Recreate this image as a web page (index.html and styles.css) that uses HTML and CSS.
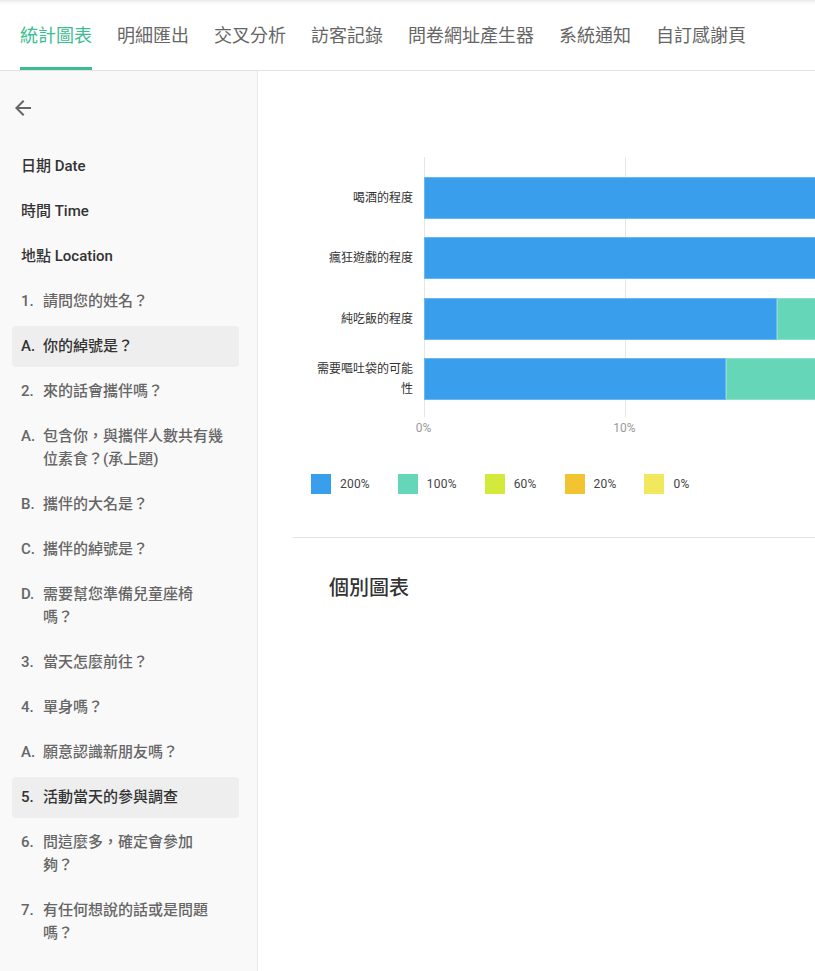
FILE: index.html
```html
<!doctype html>
<html>
    <head>
        <meta charset="utf-8" />
        <title>統計圖表</title>
        <link rel="stylesheet" href="styles.css">
    </head>
    <body>
        <nav class="tabs">
            <a class="tab active">統計圖表</a>
            <a class="tab">明細匯出</a>
            <a class="tab">交叉分析</a>
            <a class="tab">訪客記錄</a>
            <a class="tab">問卷網址產生器</a>
            <a class="tab">系統通知</a>
            <a class="tab">自訂感謝頁</a>
        </nav>

        <div class="layout">
            <aside class="sidebar">
                <div class="back">
                    <svg width="24" height="24" viewBox="0 0 24 24"><path d="M20 11H7.83l5.59-5.59L12 4l-8 8 8 8 1.41-1.41L7.83 13H20v-2z" fill="#666"/></svg>
                </div>
                <ul class="q-list">
                    <li class="q-item title">日期 Date</li>
                    <li class="q-item title">時間 Time</li>
                    <li class="q-item title">地點 Location</li>
                    <li class="q-item"><span class="num">1.</span><span>請問您的姓名？</span></li>
                    <li class="q-item active"><span class="num">A.</span><span>你的綽號是？</span></li>
                    <li class="q-item"><span class="num">2.</span><span>來的話會攜伴嗎？</span></li>
                    <li class="q-item"><span class="num">A.</span><span>包含你，與攜伴人數共有幾位素食？(承上題)</span></li>
                    <li class="q-item"><span class="num">B.</span><span>攜伴的大名是？</span></li>
                    <li class="q-item"><span class="num">C.</span><span>攜伴的綽號是？</span></li>
                    <li class="q-item"><span class="num">D.</span><span>需要幫您準備兒童座椅<br>嗎？</span></li>
                    <li class="q-item"><span class="num">3.</span><span>當天怎麼前往？</span></li>
                    <li class="q-item"><span class="num">4.</span><span>單身嗎？</span></li>
                    <li class="q-item"><span class="num">A.</span><span>願意認識新朋友嗎？</span></li>
                    <li class="q-item active"><span class="num">5.</span><span>活動當天的參與調查</span></li>
                    <li class="q-item"><span class="num">6.</span><span>問這麼多，確定會參加<br>夠？</span></li>
                    <li class="q-item"><span class="num">7.</span><span>有任何想說的話或是問題<br>嗎？</span></li>
                </ul>
            </aside>

            <main class="content">
                <div class="chart">
                    <div class="chart-labels">
                        <div class="chart-label"><span>喝酒的程度</span></div>
                        <div class="chart-label"><span>瘋狂遊戲的程度</span></div>
                        <div class="chart-label"><span>純吃飯的程度</span></div>
                        <div class="chart-label"><span>需要嘔吐袋的可能性</span></div>
                    </div>
                    <div class="chart-plot">
                        <div class="bar">
                            <div class="seg c200" style="width: 46%"></div>
                            <div class="seg c100" style="width: 30%"></div>
                        </div>
                        <div class="bar">
                            <div class="seg c200" style="width: 48%"></div>
                            <div class="seg c100" style="width: 28%"></div>
                        </div>
                        <div class="bar">
                            <div class="seg c200" style="width: 17.56%"></div>
                            <div class="seg c100" style="width: 40%"></div>
                        </div>
                        <div class="bar">
                            <div class="seg c200" style="width: 15.03%"></div>
                            <div class="seg c100" style="width: 40%"></div>
                        </div>
                    </div>
                </div>
                <div class="chart-axis">
                    <span class="tick">0%</span>
                    <span class="tick">10%</span>
                </div>

                <div class="legend">
                    <div class="legend-item"><span class="swatch c200"></span>200%</div>
                    <div class="legend-item"><span class="swatch c100"></span>100%</div>
                    <div class="legend-item"><span class="swatch c60"></span>60%</div>
                    <div class="legend-item"><span class="swatch c20"></span>20%</div>
                    <div class="legend-item"><span class="swatch c0"></span>0%</div>
                </div>

                <hr class="divider">

                <h3 class="section-title">個別圖表</h3>
            </main>
        </div>
    </body>
</html>
```

FILE: styles.css
```css
html,
body {
    height: 100%;
}
body {
    margin: 0;
    font-family: Roboto, "Noto Sans CJK TC", sans-serif;
    color: #333;
    background: #fff;
    overflow: hidden;
}
.tabs {
    display: flex;
    height: 70px;
    padding-left: 20px;
    border-bottom: 1px solid #e2e2e2;
    box-shadow: inset 0 5px 5px -5px rgba(0, 0, 0, 0.18);
}
.tab {
    display: flex;
    align-items: center;
    height: 70px;
    box-sizing: border-box;
    margin-right: 25px;
    padding-top: 1px;
    border-bottom: 3px solid transparent;
    font-size: 18px;
    color: #666;
    cursor: pointer;
}
.tab.active {
    color: #3dbd8f;
    border-bottom-color: #3dbd8f;
}
.layout {
    display: flex;
    height: calc(100% - 71px);
}
.sidebar {
    flex: 0 0 257px;
    background: #f9f9f9;
    border-right: 1px solid #e8e8e8;
    padding-top: 25px;
}
.back {
    height: 24px;
    padding-left: 11px;
}
.q-list {
    list-style: none;
    display: flex;
    flex-direction: column;
    gap: 4px;
    margin: 26px 0 0;
    padding: 0;
}
.q-item {
    display: flex;
    margin: 0 18px 0 12px;
    padding: 9px;
    border-radius: 4px;
    font-size: 15px;
    line-height: 23px;
    font-weight: 500;
    color: #666;
}
.q-item .num {
    flex: 0 0 22px;
}
.q-item.title,
.q-item.active {
    color: #333;
}
.q-item.active {
    background: #eee;
}
.content {
    flex: 1;
    min-width: 0;
    overflow: hidden;
    padding: 86px 0 0 35px;
}
.chart {
    display: flex;
    width: 2200px;
}
.chart-labels {
    flex: 0 0 131px;
    box-sizing: border-box;
    padding: 20px 11px 17px 0;
    display: flex;
    flex-direction: column;
    gap: 18.33px;
}
.chart-label {
    height: 42px;
    display: flex;
    align-items: center;
    justify-content: flex-end;
    text-align: right;
    font-size: 12px;
    line-height: 20px;
    color: #333;
}
.chart-label span {
    max-width: 100px;
}
.chart-plot {
    flex: 0 0 2010px;
    padding: 20px 0 17px;
    display: flex;
    flex-direction: column;
    gap: 18.33px;
    background: repeating-linear-gradient(to right, #e6e6e6 0 1px, transparent 1px 201px);
}
.bar {
    display: flex;
    height: 42px;
}
.seg {
    height: 100%;
    box-shadow: inset 0 0 0 1px rgba(255, 255, 255, 0.25);
}
.c200 { background: #399fec; }
.c100 { background: #66d6b9; }
.c60 { background: #d4ea3a; }
.c20 { background: #f2c431; }
.c0 { background: #f1e85d; }
.chart-axis {
    display: flex;
    width: 2200px;
    margin: 4px 0 0 30px;
}
.tick {
    flex: 0 0 201px;
    text-align: center;
    font-size: 12px;
    line-height: 14px;
    color: #999;
}
.legend {
    display: flex;
    gap: 28px;
    margin: 39px 0 0 18px;
}
.legend-item {
    display: flex;
    align-items: center;
    gap: 9px;
    font-size: 12px;
    letter-spacing: 0.2px;
    color: #444;
}
.swatch {
    width: 20px;
    height: 20px;
}
.divider {
    margin: 43px 0 0;
    border: none;
    border-top: 1px solid #e2e2e2;
}
.section-title {
    margin: 36px 0 0 36px;
    font-size: 20px;
    line-height: 28px;
    font-weight: 500;
    color: #333;
}
```
